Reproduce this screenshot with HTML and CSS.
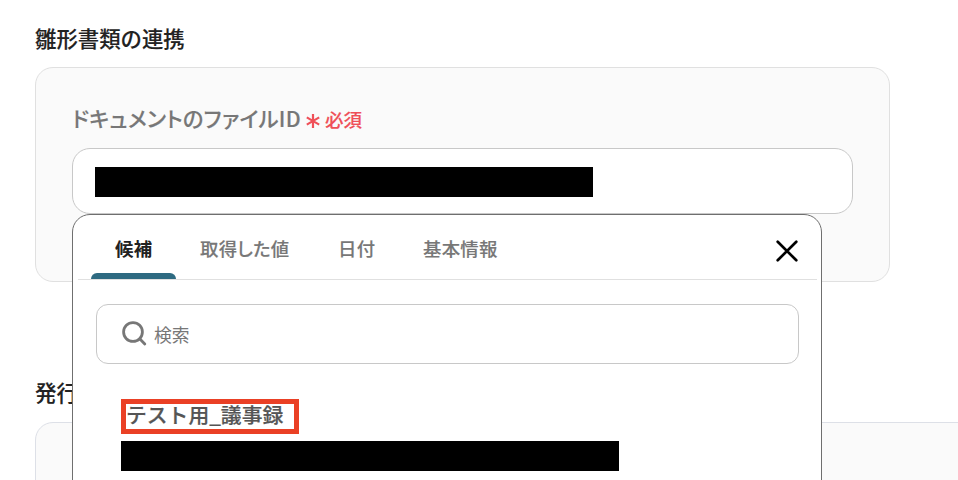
FILE: index.html
```html
<!DOCTYPE html>
<html lang="ja">
<head>
<meta charset="utf-8">
<title>雛形書類の連携</title>
<link rel="stylesheet" href="styles.css">
</head>
<body>
<main class="page">
  <section class="section">
    <h2 class="section-title">雛形書類の連携</h2>
    <div class="card">
      <div class="label"><span class="label-text">ドキュメントのファイルID</span><svg class="asterisk" viewBox="0 0 14 14"><path d="M7 0v14M0.8 3.4l12.4 7.2M13.2 3.4L0.8 10.6"/></svg><span class="required">必須</span></div>
      <div class="field">
        <div class="input"><div class="redacted"></div></div>
        <div class="dropdown">
          <div class="tabs">
            <div class="tab active"><span>候補</span></div>
            <div class="tab tab-values"><span>取得した値</span></div>
            <div class="tab tab-date"><span>日付</span></div>
            <div class="tab tab-basic"><span>基本情報</span></div>
            <svg class="close" viewBox="0 0 24 24"><path d="M2.7 2.7L21.3 21.3M21.3 2.7L2.7 21.3"/></svg>
          </div>
          <div class="search">
            <svg class="search-icon" viewBox="0 0 26 26"><circle cx="12" cy="11" r="9.4"/><path d="M18.7 17.8L23.8 23"/></svg>
            <span class="placeholder">検索</span>
          </div>
          <div class="option">
            <div class="option-name"><span>テスト用_議事録</span></div>
            <div class="redacted"></div>
          </div>
        </div>
      </div>
    </div>
  </section>
  <section class="section">
    <h2 class="section-title">発行</h2>
    <div class="card card-wide"></div>
  </section>
</main>
</body>
</html>
```
FILE: styles.css
```css
* { box-sizing: border-box; }
body {
  margin: 0;
  background: #fff;
  color: #222;
  font-family: "Noto Sans CJK JP", sans-serif;
  font-weight: 500;
  -webkit-text-stroke: 0.15px currentColor;
}
.page {
  height: 480px;
  overflow: hidden;
  padding: 22px 0 0 35px;
}
.section-title {
  margin: 0 0 13px;
  height: 32px;
  font-size: 21.4px;
  line-height: 32px;
  font-weight: 500;
}
.section + .section .section-title { line-height: 30px; }
.card {
  width: 855px;
  height: 215px;
  margin-bottom: 95px;
  padding: 34px 36px 0;
  border: 1px solid #e0e0e0;
  border-radius: 18px;
  background: #fafafa;
}
.card-wide {
  width: 1000px;
  border-color: #dde0e7;
}
.label {
  display: flex;
  align-items: center;
  height: 32px;
  margin-bottom: 14px;
  color: #777;
}
.label-text {
  font-size: 21.4px;
  line-height: 32px;
  font-feature-settings: "palt";
  letter-spacing: 0.27px;
  -webkit-text-stroke: 0.15px #777;
}
.asterisk {
  width: 14px;
  height: 14px;
  margin: 6px 5px 0;
  fill: none;
  stroke: #ef5058;
  stroke-width: 2.2;
}
.required {
  padding-top: 2px;
  color: #ef5058;
  font-size: 18.5px;
  line-height: 28px;
  -webkit-text-stroke: 0.15px #ef5058;
}
.field { position: relative; }
.input {
  display: flex;
  align-items: center;
  width: 781px;
  height: 66px;
  padding: 2px 0 0 22px;
  border: 1px solid #c8c8c8;
  border-radius: 18px;
  background: #fff;
}
.redacted {
  width: 498px;
  height: 30px;
  background: #000;
}
.dropdown {
  position: absolute;
  top: 66px;
  left: 0;
  z-index: 1;
  width: 750px;
  height: 400px;
  border: 1px solid #6f6f6f;
  border-radius: 18px;
  background: #fff;
}
.tabs {
  display: flex;
  height: 65px;
  margin: 0 4px 0 5px;
  padding-left: 13px;
  border-bottom: 1px solid #e0e0e0;
}
.tab {
  height: 64px;
  padding: 19px 24px 0;
  color: #777;
  font-size: 18.4px;
  line-height: 28px;
  white-space: nowrap;
  font-feature-settings: "palt";
  letter-spacing: 0.25px;
  -webkit-text-stroke: 0.15px #777;
}
.tab.active {
  width: 85px;
  color: #222;
  font-weight: 700;
  -webkit-text-stroke: 0;
}
.tab.active::after {
  content: "";
  display: block;
  height: 6px;
  margin: 11px -24px 0;
  border-radius: 6px 6px 0 0;
  background: #2e6a81;
}
.tab-values { width: 138px; }
.tab-date { width: 85px; }
.close {
  width: 24px;
  height: 24px;
  margin: 24px 18px 0 auto;
  fill: none;
  stroke: #000;
  stroke-width: 2.7;
  stroke-linecap: round;
}
.search {
  display: flex;
  align-items: center;
  width: 703px;
  height: 60px;
  margin: 24px 0 35px 23px;
  padding-left: 24px;
  border: 1px solid #c8c8c8;
  border-radius: 12px;
}
.search-icon {
  width: 26px;
  height: 26px;
  margin-right: 7px;
  fill: none;
  stroke: #777;
  stroke-width: 2.8;
  stroke-linecap: round;
}
.placeholder {
  color: #777;
  font-size: 17.8px;
  font-weight: 400;
  line-height: 26px;
  -webkit-text-stroke: 0;
}
.option { margin-left: 48px; }
.option-name {
  width: 178px;
  height: 35px;
  margin-bottom: 7px;
  border: 5px solid #ea4025;
  color: #555;
  font-size: 20.8px;
  line-height: 20px;
  white-space: nowrap;
  -webkit-text-stroke: 0.2px #555;
}
```
